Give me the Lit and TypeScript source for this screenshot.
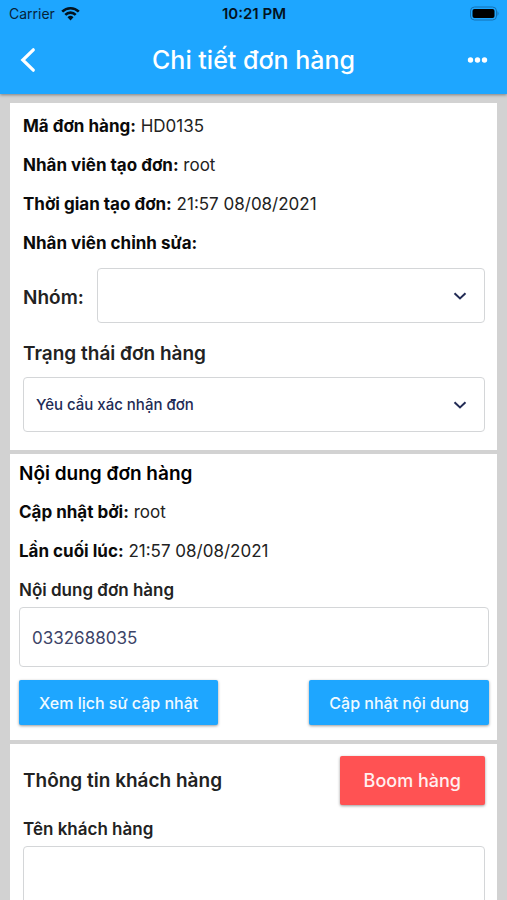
import { LitElement, html, css } from "lit";
import { customElement, property } from "lit/decorators.js";

@customElement("info-line")
class InfoLine extends LitElement {
  @property() label = "";
  @property() value = "";

  static styles = css`
    :host {
      display: block;
      line-height: 39px;
      font-size: 17px;
      color: #222;
    }
    .label {
      font-weight: 700;
      color: #0a0a0a;
    }
  `;

  render() {
    return html`<span class="label">${this.label}</span> ${this.value}`;
  }
}

@customElement("select-box")
class SelectBox extends LitElement {
  @property() name = "";
  @property() value = "";

  static styles = css`
    :host {
      display: block;
      position: relative;
    }
    .control {
      display: block;
      width: 100%;
      height: 55px;
      box-sizing: border-box;
      appearance: none;
      border: 1px solid #d4d6d8;
      border-radius: 4px;
      background: #fff;
      padding: 0 48px 0 12px;
      font: 500 15px "Inter", sans-serif;
      color: #222b55;
    }
    .chevron {
      position: absolute;
      top: 50%;
      right: 18px;
      width: 14px;
      height: 8px;
      margin-top: -4px;
      pointer-events: none;
    }
  `;

  render() {
    return html`
      <select class="control" aria-label=${this.name}>
        <option>${this.value}</option>
      </select>
      <svg class="chevron" viewBox="0 0 14 8" fill="none" stroke="#222b55" stroke-width="2">
        <path d="M1.5 1.2 L7 6.4 L12.5 1.2" />
      </svg>
    `;
  }
}

@customElement("app-root")
class AppRoot extends LitElement {
  static styles = css`
    :host {
      display: flex;
      flex-direction: column;
      height: 100vh;
      background: #d2d2d2;
      font-family: "Inter", sans-serif;
      color: #222;
    }
    .top {
      flex: none;
      position: relative;
      background: #1ea6ff;
      box-shadow: 0 1px 3px rgba(0, 0, 0, 0.4);
    }
    .status {
      display: grid;
      grid-template-columns: 1fr auto 1fr;
      align-items: center;
      height: 27px;
      padding: 0 8px 0 9px;
      font-size: 14px;
      color: #06233a;
    }
    .carrier {
      display: flex;
      align-items: center;
      gap: 6px;
    }
    .time {
      font-size: 15px;
      font-weight: 600;
      color: #03131f;
    }
    .battery {
      justify-self: end;
    }
    .nav {
      display: grid;
      grid-template-columns: 48px 1fr 48px;
      align-items: center;
      height: 67px;
      padding: 0 5px 2px;
      box-sizing: border-box;
    }
    .icon-button {
      display: grid;
      place-items: center;
      width: 48px;
      height: 48px;
      padding: 0;
      border: 0;
      background: none;
      color: #fff;
    }
    .title {
      margin: 0;
      text-align: center;
      font-size: 25px;
      line-height: 32px;
      font-weight: 500;
      color: #fff;
    }
    .content {
      flex: 1;
      min-height: 0;
      overflow-y: auto;
      scrollbar-width: none;
      display: flex;
      flex-direction: column;
      gap: 4px;
      padding: 9px 10px 0;
    }
    .card {
      flex: none;
      background: #fff;
      padding: 4px 12px 18px 13px;
    }
    .card.order {
      padding: 0 8px 15px 9px;
    }
    .card.customer {
      padding-top: 12px;
    }
    .group {
      display: grid;
      grid-template-columns: auto 1fr;
      align-items: center;
      gap: 13px;
      padding-top: 5px;
    }
    .heading {
      margin: 0;
      font-size: 19px;
      line-height: 39px;
      font-weight: 600;
    }
    .heading.dark {
      color: #000;
    }
    .heading.spaced {
      padding: 11px 0 4px;
    }
    .label {
      display: block;
      font-size: 17px;
      font-weight: 600;
      line-height: 34px;
      padding-top: 2px;
    }
    .label.tall {
      padding-top: 7px;
    }
    .name {
      padding-top: 4px;
      font-size: 19px;
      font-weight: 600;
    }
    .input {
      display: block;
      width: 100%;
      height: 60px;
      box-sizing: border-box;
      border: 1px solid #d4d6d8;
      border-radius: 4px;
      background: #fff;
      padding: 2px 12px 0;
      font: 400 17px "Inter", sans-serif;
      color: #3c4468;
    }
    .row {
      display: flex;
      justify-content: space-between;
      align-items: center;
    }
    .actions {
      padding-top: 13px;
    }
    .button {
      height: 45px;
      padding: 0 20px;
      border: 0;
      border-radius: 2px;
      background: #1ea6ff;
      box-shadow: 0 1px 3px rgba(0, 0, 0, 0.4);
      font: 500 16px "Inter", sans-serif;
      color: #f0faff;
    }
    .button.danger {
      height: 49px;
      padding: 0 24px;
      background: #ff5253;
      font-size: 18px;
      color: #fff0f0;
    }
  `;

  render() {
    return html`
      <header class="top">
        <div class="status">
          <span class="carrier">
            Carrier
            <svg width="19" height="15" viewBox="0 0 19 15" fill="none" stroke="#03131f" stroke-width="2.6">
              <path d="M1.2 5.6 A11.8 11.8 0 0 1 17.8 5.6" />
              <path d="M4.3 8.8 A7.4 7.4 0 0 1 14.7 8.8" />
              <path d="M9.5 14.4 L6.5 11.3 A4.3 4.3 0 0 1 12.5 11.3 Z" fill="#03131f" stroke="none" />
            </svg>
          </span>
          <span class="time">10:21 PM</span>
          <svg class="battery" width="30" height="15" viewBox="0 0 30 15">
            <rect x="1.500" y="1" width="26" height="13" rx="4" fill="none" stroke="#1571b3" />
            <rect x="3.500" y="3" width="22" height="9" rx="2" fill="#000" />
            <path d="M28.500 5 Q30.500 7.500 28.500 10 Z" fill="#1571b3" />
          </svg>
        </div>
        <nav class="nav">
          <button class="icon-button" aria-label="Quay lại">
            <svg width="20" height="28" viewBox="0 0 20 28" fill="none" stroke="currentColor" stroke-width="3.2" stroke-linecap="round">
              <path d="M14.300 3.800 L3.800 14 L14.300 24.200" />
            </svg>
          </button>
          <h1 class="title">Chi tiết đơn hàng</h1>
          <button class="icon-button" aria-label="Tuỳ chọn">
            <svg width="22" height="6" viewBox="0 0 22 6" fill="currentColor">
              <circle cx="3.500" cy="3" r="2.700" />
              <circle cx="10.500" cy="3" r="2.700" />
              <circle cx="17.500" cy="3" r="2.700" />
            </svg>
          </button>
        </nav>
      </header>
      <main class="content">
        <section class="card">
          <info-line label="Mã đơn hàng:" value="HD0135"></info-line>
          <info-line label="Nhân viên tạo đơn:" value="root"></info-line>
          <info-line label="Thời gian tạo đơn:" value="21:57 08/08/2021"></info-line>
          <info-line label="Nhân viên chỉnh sửa:"></info-line>
          <div class="group">
            <span class="name">Nhóm:</span>
            <select-box name="Nhóm"></select-box>
          </div>
          <h2 class="heading spaced">Trạng thái đơn hàng</h2>
          <select-box name="Trạng thái đơn hàng" value="Yêu cầu xác nhận đơn"></select-box>
        </section>
        <section class="card order">
          <h2 class="heading dark">Nội dung đơn hàng</h2>
          <info-line label="Cập nhật bởi:" value="root"></info-line>
          <info-line label="Lần cuối lúc:" value="21:57 08/08/2021"></info-line>
          <label class="label" for="note">Nội dung đơn hàng</label>
          <input class="input" id="note" .value=${"0332688035"} />
          <div class="row actions">
            <button class="button">Xem lịch sử cập nhật</button>
            <button class="button">Cập nhật nội dung</button>
          </div>
        </section>
        <section class="card customer">
          <div class="row">
            <h2 class="heading">Thông tin khách hàng</h2>
            <button class="button danger">Boom hàng</button>
          </div>
          <label class="label tall" for="customer">Tên khách hàng</label>
          <input class="input" id="customer" />
        </section>
      </main>
    `;
  }
}
